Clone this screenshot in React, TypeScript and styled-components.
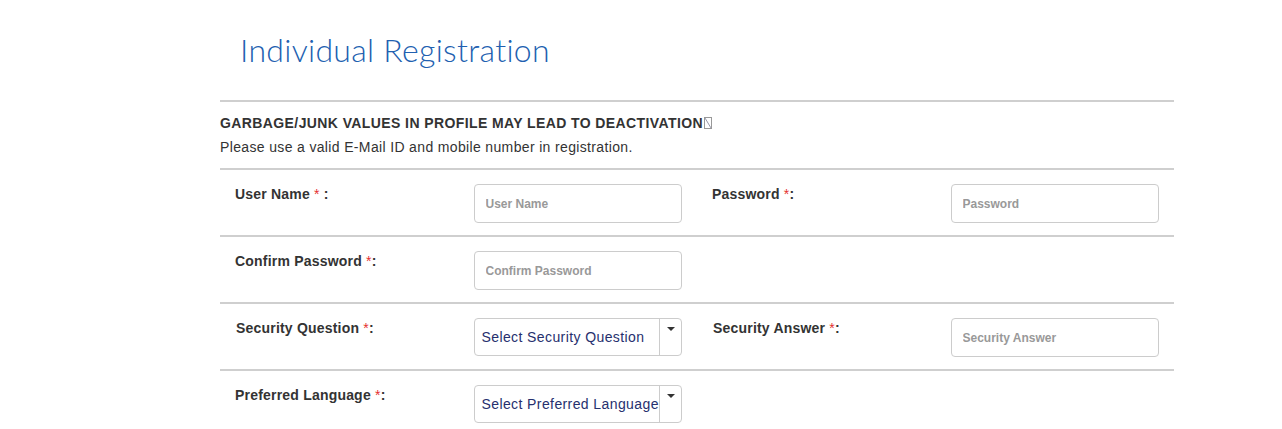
import React from "react";
import styled, { createGlobalStyle } from "styled-components";

const GlobalStyle = createGlobalStyle`
  body {
    margin: 0;
    background: #fff;
    font-family: "Liberation Sans", Arial, sans-serif;
    color: #333;
  }
`;

const Page = styled.div`
  padding-left: 220px;
  width: 954px;
`;

const Title = styled.h1`
  margin: 0;
  height: 100px;
  padding: 28px 0 0 20px;
  box-sizing: border-box;
  font-family: "Lato", sans-serif;
  font-weight: 300;
  font-size: 32px;
  line-height: 44px;
  color: #2160b0;
  letter-spacing: 0.3px;
`;

const Notice = styled.div`
  border-top: 2px solid #cfcfcf;
  border-bottom: 2px solid #cfcfcf;
  padding: 12px 0 11px;
`;

const Warning = styled.div`
  font-weight: bold;
  font-size: 14px;
  line-height: 18px;
  letter-spacing: 0.4px;
  text-transform: uppercase;
  display: flex;
  align-items: center;
`;

const Hint = styled.div`
  font-size: 14px;
  line-height: 20px;
  letter-spacing: 0.35px;
  margin-top: 5px;
`;

const Row = styled.div`
  display: grid;
  grid-template-columns: repeat(4, 1fr);
  padding: 14px 0 12px;
  border-bottom: 2px solid #cfcfcf;
`;

const Cell = styled.div`
  padding: 0 15px;
`;

const Label = styled.label<{ $indent?: number }>`
  display: block;
  font-weight: bold;
  font-size: 14px;
  line-height: 20px;
  letter-spacing: 0.2px;
  color: #333;
  padding-left: ${(p) => p.$indent ?? 0}px;
`;

const Star = styled.span`
  color: #e53030;
  font-weight: normal;
`;

const Input = styled.input`
  display: block;
  width: 100%;
  height: 39px;
  box-sizing: border-box;
  border: 1px solid #ccc;
  border-radius: 4px;
  padding: 0 11px;
  font-family: "Liberation Sans", Arial, sans-serif;
  font-size: 12px;
  font-weight: bold;
  color: #555;
  &::placeholder {
    color: #999;
  }
`;

const Select = styled.div`
  display: flex;
  height: 38px;
  box-sizing: border-box;
  border: 1px solid #ccc;
  border-radius: 4px;
  overflow: hidden;
`;

const SelectText = styled.div`
  flex: 1;
  padding: 0 0 0 7px;
  display: flex;
  align-items: center;
  font-size: 14px;
  letter-spacing: 0.4px;
  color: #26306e;
  white-space: nowrap;
  overflow: hidden;
`;

const Caret = styled.div`
  width: 22px;
  border-left: 1px solid #ccc;
  display: flex;
  justify-content: center;
  padding-top: 8px;
  box-sizing: border-box;
  &::after {
    content: "";
    width: 0;
    height: 0;
    border-left: 4px solid transparent;
    border-right: 4px solid transparent;
    border-top: 4px solid #333;
  }
`;

const Tofu = () => (
  <svg width="8" height="12" viewBox="0 0 8 12" style={{ marginLeft: 1 }}>
    <rect x="0.5" y="0.5" width="7" height="11" fill="none" stroke="#999" />
    <line x1="1" y1="1" x2="7" y2="11" stroke="#99a" />
  </svg>
);

const Req = ({ text, gap = true }: { text: string; gap?: boolean }) => (
  <>
    {text} <Star>*</Star>
    {gap ? " :" : ":"}
  </>
);

export default function App() {
  return (
    <Page>
      <GlobalStyle />
      <Title>Individual Registration</Title>
      <Notice>
        <Warning>
          Garbage/Junk values in profile may lead to deactivation
          <Tofu />
        </Warning>
        <Hint>Please use a valid E-Mail ID and mobile number in registration.</Hint>
      </Notice>

      <Row>
        <Cell>
          <Label>
            <Req text="User Name" />
          </Label>
        </Cell>
        <Cell>
          <Input placeholder="User Name" />
        </Cell>
        <Cell>
          <Label>
            <Req text="Password" gap={false} />
          </Label>
        </Cell>
        <Cell>
          <Input type="password" placeholder="Password" />
        </Cell>
      </Row>

      <Row>
        <Cell>
          <Label>
            <Req text="Confirm Password" gap={false} />
          </Label>
        </Cell>
        <Cell>
          <Input type="password" placeholder="Confirm Password" />
        </Cell>
      </Row>

      <Row>
        <Cell>
          <Label $indent={1}>
            <Req text="Security Question" gap={false} />
          </Label>
        </Cell>
        <Cell>
          <Select>
            <SelectText>Select Security Question</SelectText>
            <Caret />
          </Select>
        </Cell>
        <Cell>
          <Label $indent={1}>
            <Req text="Security Answer" gap={false} />
          </Label>
        </Cell>
        <Cell>
          <Input placeholder="Security Answer" />
        </Cell>
      </Row>

      <Row>
        <Cell>
          <Label>
            <Req text="Preferred Language" gap={false} />
          </Label>
        </Cell>
        <Cell>
          <Select>
            <SelectText>Select Preferred Language</SelectText>
            <Caret />
          </Select>
        </Cell>
      </Row>
    </Page>
  );
}
